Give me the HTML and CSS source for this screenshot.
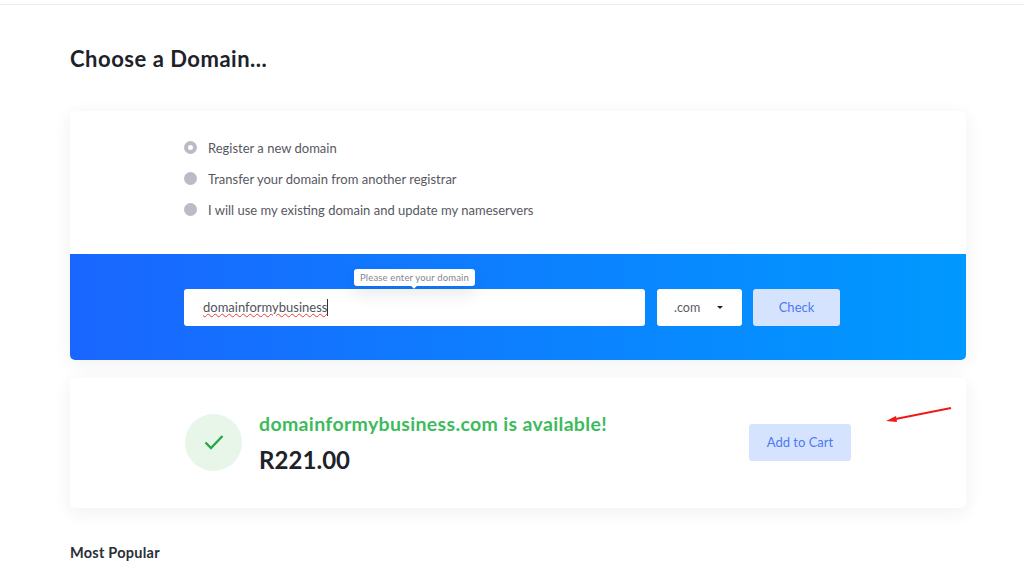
FILE: index.html
```html
<!DOCTYPE html>
<html lang="en">
<head>
    <meta charset="UTF-8">
    <title>Choose a Domain</title>
    <link rel="stylesheet" href="styles.css">
</head>
<body>
    <div class="topbar"></div>
    <div class="container">
        <h1>Choose a Domain...</h1>

        <div class="card domain-card">
            <div class="options">
                <div class="option"><span class="radio selected"></span>Register a new domain</div>
                <div class="option"><span class="radio"></span>Transfer your domain from another registrar</div>
                <div class="option"><span class="radio"></span>I will use my existing domain and update my nameservers</div>
            </div>
            <div class="search-band">
                <div class="input-box">
                    <span class="typed">domainformybusiness</span>
                    <div class="tooltip">Please enter your domain</div>
                </div>
                <div class="tld">.com<span class="caret"></span></div>
                <button class="btn check-btn">Check</button>
            </div>
        </div>

        <div class="card result-card">
            <div class="check-circle">
                <svg width="20" height="16" viewBox="0 0 20 16"><path d="M1.5 8.5 L7 14 L18.5 2" fill="none" stroke="#28a745" stroke-width="2.4"/></svg>
            </div>
            <div class="result-text">
                <div class="available">domainformybusiness.com is available!</div>
                <div class="price">R221.00</div>
            </div>
            <button class="btn cart-btn">Add to Cart</button>
            <svg class="arrow" width="70" height="20" viewBox="0 0 70 20"><path d="M66 1 L8 12.5" stroke="#f01818" stroke-width="2" fill="none"/><path d="M1 14 L11 9 L12 15 Z" fill="#f01818"/></svg>
        </div>

        <h2>Most Popular</h2>
    </div>
    <div class="next-card"></div>
</body>
</html>
```

FILE: styles.css
```css
body {
    font-family: Lato, "Noto Sans", sans-serif;
    background-color: #fff;
    margin: 0;
    height: 577px;
    overflow: hidden;
    position: relative;
}

.topbar {
    height: 4px;
    border-bottom: 1px solid #ececef;
}

.container {
    padding: 0 58px 0 70px;
}

h1 {
    margin: 0;
    padding-top: 39px;
    height: 67px;
    font-size: 22px;
    line-height: 30px;
    font-weight: 700;
    color: #20222a;
    letter-spacing: 0.52px;
}

.card {
    background: #fff;
    border-radius: 5px;
    box-shadow: 0 4px 18px rgba(30, 40, 70, 0.07);
}

.options {
    height: 143px;
    padding: 21px 0 0 114px;
    box-sizing: border-box;
}

.option {
    display: flex;
    align-items: center;
    height: 31px;
    font-size: 13px;
    color: #58585f;
}

.radio {
    width: 13px;
    height: 13px;
    border-radius: 50%;
    background: #b9bbc7;
    margin-right: 11px;
    flex-shrink: 0;
}

.radio.selected {
    width: 5px;
    height: 5px;
    background: #fff;
    border: 4px solid #b9bbc7;
}

.search-band {
    display: flex;
    height: 106px;
    padding: 35px 0 0 114px;
    box-sizing: border-box;
    background: linear-gradient(90deg, #1a66ff, #0099ff);
    border-radius: 0 0 5px 5px;
}

.input-box {
    position: relative;
    width: 442px;
    height: 37px;
    padding-left: 19px;
    margin-right: 12px;
    background: #fff;
    border-radius: 3px;
    line-height: 37px;
    font-size: 13px;
    color: #50525c;
}

.typed {
    text-decoration: underline wavy #e8403c 1px;
    border-right: 1px solid #333;
    padding-bottom: 1px;
}

.tooltip {
    position: absolute;
    left: 170px;
    top: -20px;
    width: 121px;
    height: 17px;
    background: #fff;
    border-radius: 3px;
    font-size: 9.5px;
    line-height: 17px;
    text-align: center;
    color: #85868f;
    letter-spacing: 0.15px;
    box-shadow: 0 8px 16px rgba(30, 40, 70, 0.1);
}

.tooltip::after {
    content: "";
    position: absolute;
    left: 58px;
    bottom: -2px;
    width: 4px;
    height: 4px;
    background: #fff;
    transform: rotate(45deg);
}

.tld {
    display: flex;
    align-items: center;
    width: 68px;
    height: 36px;
    padding: 0 0 1px 17px;
    margin-right: 11px;
    background: #fff;
    border-radius: 3px;
    font-size: 12.5px;
    color: #5c5c64;
}

.caret {
    margin-left: 17px;
    border-left: 3px solid transparent;
    border-right: 3px solid transparent;
    border-top: 3px solid #222;
}

.btn {
    font-family: inherit;
    font-size: 13px;
    color: #4d78f5;
    background: #d6e3ff;
    border: none;
    border-radius: 3px;
    padding: 0 0 1px;
}

.check-btn {
    width: 87px;
    height: 37px;
}

.result-card {
    position: relative;
    display: flex;
    align-items: center;
    height: 130px;
    margin-top: 18px;
    padding-left: 115px;
}

.check-circle {
    display: flex;
    align-items: center;
    justify-content: center;
    width: 57px;
    height: 57px;
    border-radius: 50%;
    background: #e8f6ea;
    margin: 0 17px 2px 0;
}

.result-text {
    width: 490px;
}

.available {
    font-size: 19.5px;
    line-height: 26px;
    font-weight: 700;
    color: #3dbb5b;
    letter-spacing: 0.34px;
}

.price {
    font-size: 24px;
    line-height: 30px;
    margin-top: 8px;
    font-weight: 700;
    color: #20222a;
    letter-spacing: 0.05px;
}

.cart-btn {
    width: 102px;
    height: 37px;
    margin-bottom: 2px;
}

.arrow {
    position: absolute;
    left: 815px;
    top: 29px;
}

h2 {
    margin: 36px 0 0;
    font-size: 14.5px;
    line-height: 18px;
    font-weight: 700;
    color: #2c2e36;
    letter-spacing: 0.25px;
}

.next-card {
    position: absolute;
    left: 70px;
    top: 576px;
    width: 896px;
    height: 1px;
    box-shadow: 0 -2px 14px rgba(30, 40, 70, 0.05);
}
```
